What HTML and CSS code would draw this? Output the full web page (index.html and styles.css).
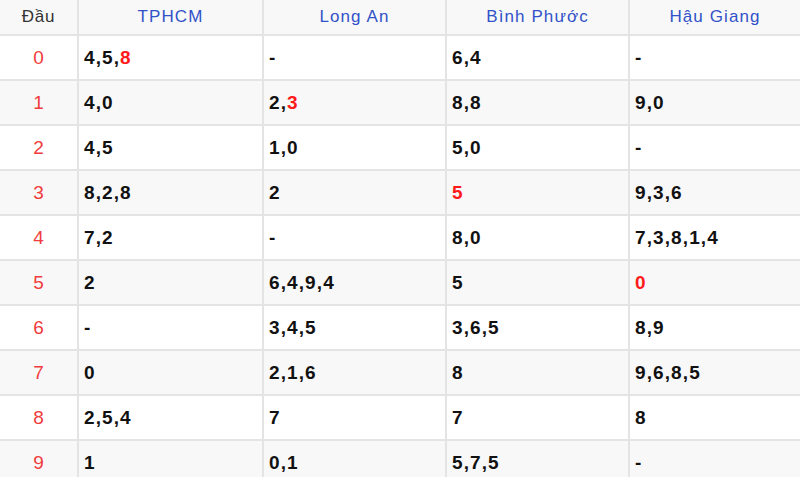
FILE: index.html
```html
<!DOCTYPE html>
<html lang="vi">
<head>
<meta charset="utf-8">
<link rel="stylesheet" href="styles.css">
</head>
<body>
<div class="table">
  <div class="row head">
    <div class="cell first">Đầu</div>
    <div class="cell prov">TPHCM</div>
    <div class="cell prov">Long An</div>
    <div class="cell prov">Bình Phước</div>
    <div class="cell prov">Hậu Giang</div>
  </div>
  <div class="row"><div class="cell num">0</div><div class="cell val">4,5,<span class="hot">8</span></div><div class="cell val">-</div><div class="cell val">6,4</div><div class="cell val">-</div></div>
  <div class="row"><div class="cell num">1</div><div class="cell val">4,0</div><div class="cell val">2,<span class="hot">3</span></div><div class="cell val">8,8</div><div class="cell val">9,0</div></div>
  <div class="row"><div class="cell num">2</div><div class="cell val">4,5</div><div class="cell val">1,0</div><div class="cell val">5,0</div><div class="cell val">-</div></div>
  <div class="row"><div class="cell num">3</div><div class="cell val">8,2,8</div><div class="cell val">2</div><div class="cell val"><span class="hot">5</span></div><div class="cell val">9,3,6</div></div>
  <div class="row"><div class="cell num">4</div><div class="cell val">7,2</div><div class="cell val">-</div><div class="cell val">8,0</div><div class="cell val">7,3,8,1,4</div></div>
  <div class="row"><div class="cell num">5</div><div class="cell val">2</div><div class="cell val">6,4,9,4</div><div class="cell val">5</div><div class="cell val"><span class="hot">0</span></div></div>
  <div class="row"><div class="cell num">6</div><div class="cell val">-</div><div class="cell val">3,4,5</div><div class="cell val">3,6,5</div><div class="cell val">8,9</div></div>
  <div class="row"><div class="cell num">7</div><div class="cell val">0</div><div class="cell val">2,1,6</div><div class="cell val">8</div><div class="cell val">9,6,8,5</div></div>
  <div class="row"><div class="cell num">8</div><div class="cell val">2,5,4</div><div class="cell val">7</div><div class="cell val">7</div><div class="cell val">8</div></div>
  <div class="row"><div class="cell num">9</div><div class="cell val">1</div><div class="cell val">0,1</div><div class="cell val">5,7,5</div><div class="cell val">-</div></div>
</div>
</body>
</html>
```
FILE: styles.css
```css
html, body {
  margin: 0;
  padding: 0;
  background: #ffffff;
  overflow: hidden;
  font-family: "Liberation Sans", Arial, sans-serif;
}

.table {
  display: flex;
  flex-direction: column;
  gap: 2px;
  background: #e4e4e4;
  width: 800px;
}

.row {
  display: grid;
  grid-template-columns: 77px 183px 181px 181px 1fr;
  gap: 2px;
  height: 43px;
}

.row:nth-child(odd) .cell {
  background: #f8f8f8;
}

.row:nth-child(even) .cell {
  background: #ffffff;
}

.row.head {
  height: 34px;
}

.cell {
  display: flex;
  align-items: center;
}

.first {
  justify-content: center;
  color: #333333;
  font-size: 17px;
  letter-spacing: 0.7px;
}

.prov {
  justify-content: center;
  color: #3152c8;
  font-size: 17px;
  letter-spacing: 1.1px;
}

.num {
  justify-content: center;
  color: #f03c3c;
  font-size: 19px;
}

.val {
  padding-left: 5px;
  color: #111111;
  font-size: 19px;
  font-weight: bold;
  letter-spacing: 1.1px;
}

.hot {
  color: #ff1a1a;
}
```
